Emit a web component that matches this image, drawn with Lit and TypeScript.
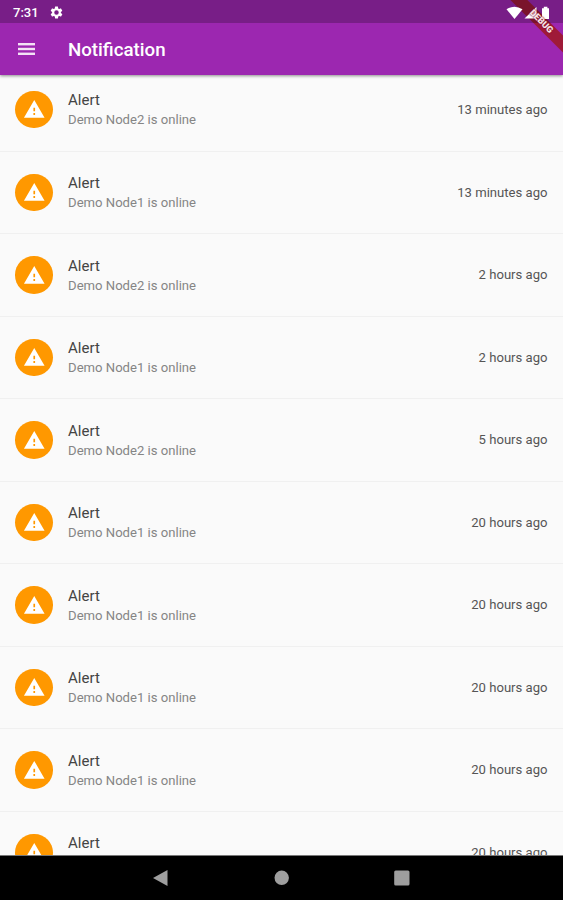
import { LitElement, html, css, svg } from "lit";
import { customElement, property } from "lit/decorators.js";

interface Notice {
  node: string;
  when: string;
}

const NOTICES: Notice[] = [
  { node: "Node2", when: "13 minutes ago" },
  { node: "Node1", when: "13 minutes ago" },
  { node: "Node2", when: "2 hours ago" },
  { node: "Node1", when: "2 hours ago" },
  { node: "Node2", when: "5 hours ago" },
  { node: "Node1", when: "20 hours ago" },
  { node: "Node1", when: "20 hours ago" },
  { node: "Node1", when: "20 hours ago" },
  { node: "Node1", when: "20 hours ago" },
  { node: "Node1", when: "20 hours ago" },
];

const gear = svg`<path fill-rule="evenodd" d="M19.4 13c.04-.3.07-.65.07-1s-.03-.7-.07-1l2.1-1.65c.2-.15.25-.42.12-.64l-2-3.46c-.12-.22-.38-.3-.6-.22l-2.5 1a7.3 7.3 0 0 0-1.7-.98L14.5 2.4A.5.5 0 0 0 14 2h-4a.5.5 0 0 0-.5.42l-.37 2.65c-.6.25-1.17.58-1.7.98l-2.48-1a.5.5 0 0 0-.6.22l-2 3.46a.5.5 0 0 0 .12.64L4.6 11a8 8 0 0 0 0 2l-2.1 1.65a.5.5 0 0 0-.13.64l2 3.46c.12.22.39.3.6.22l2.5-1c.52.4 1.08.73 1.7.98l.37 2.65c.03.24.24.4.5.4h4a.5.5 0 0 0 .5-.4l.37-2.65a7.3 7.3 0 0 0 1.7-.98l2.48 1c.23.08.49 0 .61-.22l2-3.46a.5.5 0 0 0-.12-.64zM12 15.8a3.8 3.8 0 1 1 0-7.6 3.8 3.8 0 0 1 0 7.6z"/>`;

@customElement("notice-row")
export class NoticeRow extends LitElement {
  @property() node = "";
  @property() when = "";

  static styles = css`
    :host {
      display: flex;
      align-items: center;
      box-sizing: border-box;
      height: 82.5px;
      flex: none;
      padding: 0 15.5px 0 15.3px;
      border-bottom: 1px solid #f0f0f0;
    }
    .avatar {
      width: 37.6px;
      height: 37.6px;
      flex: none;
      border-radius: 50%;
      background: #ff9800;
      display: flex;
      align-items: center;
      justify-content: center;
    }
    .warn {
      width: 22.5px;
      height: 22.5px;
      fill: #fff;
    }
    .body {
      flex: 1;
      margin-left: 15.2px;
      padding-top: 1.5px;
    }
    .name {
      font-size: 15px;
      line-height: 19px;
      color: #444;
    }
    .text {
      font-size: 13.1px;
      line-height: 19px;
      color: #858585;
    }
    .when {
      font-size: 13.1px;
      color: #555;
    }
  `;

  render() {
    return html`
      <div class="avatar">
        <svg class="warn" viewBox="0 0 24 24">
          <path fill-rule="evenodd" d="M1 21h22L12 2 1 21zm11.900-3h-1.800v-1.900h1.800zm0-4h-1.800v-3.700h1.800z" />
        </svg>
      </div>
      <div class="body">
        <div class="name">Alert</div>
        <div class="text">Demo ${this.node} is online</div>
      </div>
      <div class="when">${this.when}</div>
    `;
  }
}

@customElement("app-root")
export class AppRoot extends LitElement {
  static styles = css`
    :host {
      display: flex;
      flex-direction: column;
      position: relative;
      height: 900px;
      overflow: hidden;
      background: #fafafa;
      font-family: Roboto, sans-serif;
    }
    .header {
      flex: none;
      position: relative;
      background: #9c27b0;
      box-shadow: 0 1px 3px rgba(0, 0, 0, 0.45);
      z-index: 1;
    }
    .status {
      position: relative;
      box-sizing: border-box;
      height: 23px;
      display: flex;
      align-items: center;
      padding: 2px 12px 0 13px;
      background: rgba(0, 0, 0, 0.23);
      color: #fff;
      z-index: 2;
    }
    .clock {
      font-size: 13px;
      font-weight: 500;
      width: 37px;
    }
    .gear {
      width: 13px;
      height: 13px;
      fill: #fff;
    }
    .spacer {
      flex: 1;
    }
    .signals {
      width: 45px;
      height: 14px;
      fill: #fff;
    }
    .bar {
      box-sizing: border-box;
      height: 52px;
      padding-top: 1px;
      display: flex;
      align-items: center;
    }
    .menu {
      width: 17px;
      height: 12px;
      margin: 0 33px 1px 18px;
      fill: #f3e2f5;
    }
    .title {
      font-size: 18.7px;
      font-weight: 500;
      line-height: 22px;
      padding-top: 1px;
      color: #fff;
    }
    .list {
      flex: 1;
      min-height: 0;
      display: flex;
      flex-direction: column;
      overflow: hidden;
    }
    .first {
      height: 76.6px;
      padding-bottom: 7px;
    }
    .nav {
      box-sizing: border-box;
      height: 45px;
      flex: none;
      background: #000;
      border-top: 1px solid #777;
      display: flex;
      justify-content: center;
    }
    .keys {
      width: 563px;
      height: 44px;
      fill: #9e9e9e;
    }
    .ribbon {
      position: absolute;
      top: 0;
      right: 0;
      width: 64px;
      height: 64px;
      overflow: hidden;
      z-index: 1;
    }
    .label {
      z-index: 3;
    }
    .band {
      position: absolute;
      left: -8px;
      top: 16px;
      width: 100px;
      height: 11.5px;
      line-height: 11.5px;
      transform: rotate(45deg);
      color: #fff;
      font-size: 9px;
      font-weight: 900;
      text-align: center;
    }
    .fill {
      background: rgba(160, 24, 36, 0.86);
    }
    .word {
      color: #f6e3e8;
      text-shadow: 0 0 1px #8a1428, 0 0 2px #8a1428;
    }
  `;

  render() {
    return html`
      <div class="header">
        <div class="status">
          <span class="clock">7:31</span>
          <svg class="gear" viewBox="1 1 22 22">${gear}</svg>
          <span class="spacer"></span>
          <svg class="signals" viewBox="506 5 45 14">
            <path d="M506.500 8.200Q514.500 3.200 522.500 8.200L514.500 18z" />
            <path d="M536.500 6V17.500H524.500z" />
            <path d="M542 7.200h1.800v-1.400h3.600v1.400h1.600v10.800h-7z" />
          </svg>
        </div>
        <div class="bar">
          <svg class="menu" viewBox="0 0 17 12">
            <rect width="17" height="2.400" />
            <rect y="4.800" width="17" height="2.400" />
            <rect y="9.600" width="17" height="2.400" />
          </svg>
          <span class="title">Notification</span>
        </div>
        <div class="ribbon"><div class="band fill"></div></div>
        <div class="ribbon label"><div class="band word">DEBUG</div></div>
      </div>
      <div class="list">
        ${NOTICES.map(
          (n, i) => html`<notice-row class=${i === 0 ? "first" : ""} .node=${n.node} .when=${n.when}></notice-row>`
        )}
      </div>
      <div class="nav">
        <svg class="keys" viewBox="0 856 563 44">
          <path d="M153 878L167.500 870V886z" />
          <circle cx="281.700" cy="877.800" r="7.200" />
          <rect x="394.200" y="870.500" width="15.300" height="15" rx="1.500" />
        </svg>
      </div>
    `;
  }
}
